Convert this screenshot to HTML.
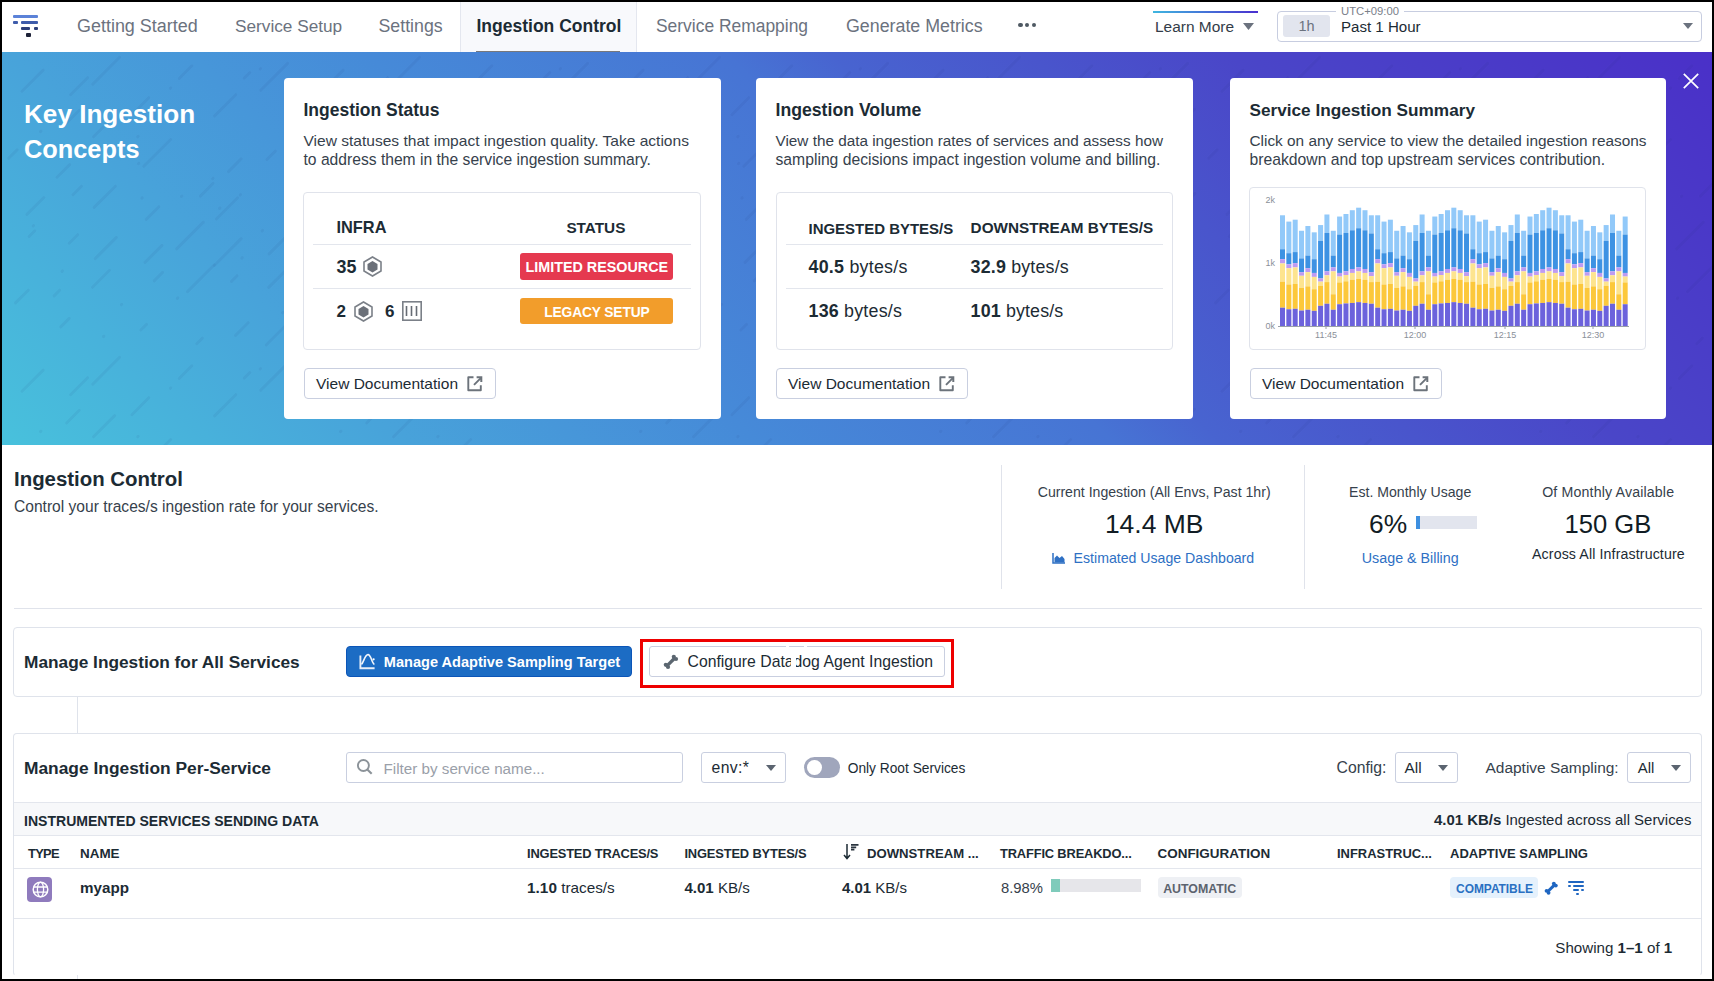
<!DOCTYPE html>
<html><head><meta charset="utf-8"><title>Ingestion Control</title>
<style>
html,body{margin:0;padding:0;width:1714px;height:981px;overflow:hidden;background:#000;}
body{position:relative;font-family:"Liberation Sans",sans-serif;color:#1c2b34;}
.t{position:absolute;white-space:nowrap;line-height:1;}
.r{position:absolute;box-sizing:border-box;}
svg{position:absolute;overflow:visible;}
</style></head><body>
<div class="r" style="left:2px;top:2px;width:1710px;height:977px;background:#fff;"></div>
<div class="r" style="left:13px;top:14.5px;width:25px;height:3.0px;background:#5b82d8;border-radius:1px;"></div>
<div class="r" style="left:13px;top:21px;width:5px;height:3px;background:#3f5cab;border-radius:1px;"></div>
<div class="r" style="left:21px;top:21px;width:17px;height:3px;background:#3f5cab;border-radius:1px;"></div>
<div class="r" style="left:21px;top:27px;width:9px;height:3px;background:#2d3f7a;border-radius:1px;"></div>
<div class="r" style="left:33.5px;top:27px;width:4.5px;height:3px;background:#2d3f7a;border-radius:1px;"></div>
<div class="r" style="left:26px;top:33px;width:4.5px;height:3.5px;background:#1d2238;border-radius:1px;"></div>
<div class="r" style="left:460px;top:2px;width:177px;height:50px;background:#f8f9fc;border-left:1px solid #e4e7ef;border-right:1px solid #e4e7ef;"></div>
<div class="r" style="left:476px;top:51px;width:144px;height:1px;background:#77787c;"></div>
<div class="t" style="left:77.0px;top:18.30px;font-size:17.95px;color:#6b727e;letter-spacing:0.000px;">Getting Started</div>
<div class="t" style="left:235.0px;top:18.30px;font-size:17.23px;color:#6b727e;letter-spacing:0.000px;">Service Setup</div>
<div class="t" style="left:378.5px;top:18.30px;font-size:17.75px;color:#6b727e;letter-spacing:0.000px;">Settings</div>
<div class="t" style="left:476.5px;top:18.30px;font-size:17.5px;font-weight:700;color:#1c2b34;letter-spacing:-0.000px;">Ingestion Control</div>
<div class="t" style="left:656.0px;top:18.30px;font-size:17.43px;color:#6b727e;letter-spacing:0.000px;">Service Remapping</div>
<div class="t" style="left:846.0px;top:18.30px;font-size:17.82px;color:#6b727e;letter-spacing:0.000px;">Generate Metrics</div>
<div class="r" style="left:1018.4px;top:22.6px;width:4.2000000000000455px;height:4.199999999999999px;background:#4f5963;border-radius:50%;"></div>
<div class="r" style="left:1025.1000000000001px;top:22.6px;width:4.199999999999818px;height:4.199999999999999px;background:#4f5963;border-radius:50%;"></div>
<div class="r" style="left:1031.8000000000002px;top:22.6px;width:4.199999999999818px;height:4.199999999999999px;background:#4f5963;border-radius:50%;"></div>
<div class="r" style="left:1153px;top:11px;width:105px;height:2px;background:linear-gradient(90deg,#3fb6e0,#4a2fcf);"></div>
<div class="t" style="left:1155.0px;top:19.00px;font-size:15.46px;color:#333c48;letter-spacing:0.000px;">Learn More</div>
<svg style="left:1243px;top:23px" width="11" height="7"><path d="M0 0H11L5.5 7Z" fill="#6b727e"/></svg>
<div class="r" style="left:1277px;top:11px;width:425px;height:31px;border:1px solid #c7cde0;border-radius:4px;"></div>
<div class="r" style="left:1336px;top:6px;width:68px;height:8px;background:#fff;"></div>
<div class="t" style="left:1341.0px;top:5.60px;font-size:11.29px;color:#7a808a;letter-spacing:0.000px;">UTC+09:00</div>
<div class="r" style="left:1283px;top:15px;width:47px;height:22px;background:#e2e5ee;border-radius:3px;"></div>
<div class="t" style="left:1306.5px;top:18.60px;font-size:14.5px;color:#6b727e;transform:translateX(-50%);">1h</div>
<div class="t" style="left:1341.0px;top:19.00px;font-size:15.09px;color:#1c2b34;letter-spacing:0.000px;">Past 1 Hour</div>
<svg style="left:1683px;top:23px" width="10" height="6"><path d="M0 0H10L5 6Z" fill="#6b727e"/></svg>
<div class="r" style="left:2px;top:52px;width:1710px;height:393px;background:linear-gradient(45deg,#48c1dc 0%,#48a3da 19%,#468ad8 36%,#4774d4 53%,#4864d0 58%,#4a46c8 77%,#4a30c8 100%);"></div>
<div class="r" style="left:2px;top:52px;width:1710px;height:393px;overflow:hidden"><svg width="1710" height="393" style="left:0;top:0"><defs><pattern id="dp" width="300" height="300" patternUnits="userSpaceOnUse"><g stroke="rgba(20,40,110,0.06)" stroke-width="3" stroke-linecap="round" fill="none"><path d="M20.0 39.3L41.2 18.1"/><path d="M238.1 143.0l0.5 -0.5"/><path d="M6.7 106.3L15.2 97.8"/><path d="M239.8 206.1l0.5 -0.5"/><path d="M24.9 162.4L41.9 145.5"/><path d="M27.1 184.5L32.8 178.8"/><path d="M260.1 178.9l0.5 -0.5"/><path d="M13.5 250.9L26.3 238.2"/><path d="M68.6 42.7L85.6 25.7"/><path d="M64.6 71.0L77.3 58.3"/><path d="M168.3 36.3l0.5 -0.5"/><path d="M55.0 125.3L67.7 112.6"/><path d="M71.0 142.7L79.5 134.2"/><path d="M210.6 126.7l0.5 -0.5"/><path d="M67.2 191.2L75.7 182.7"/><path d="M101.4 284.6l0.5 -0.5"/><path d="M52.1 243.9L57.7 238.2"/><path d="M139.8 146.2l0.5 -0.5"/><path d="M58.7 274.9L67.2 266.4"/><path d="M90.7 32.2L117.6 5.3"/><path d="M91.5 84.8L112.7 63.6"/><path d="M119.3 252.8l0.5 -0.5"/><path d="M92.5 100.9L98.2 95.2"/><path d="M92.1 155.4L113.4 134.2"/><path d="M31.1 174.0l0.5 -0.5"/><path d="M93.2 206.6L114.4 185.4"/><path d="M175.3 246.4l0.5 -0.5"/><path d="M90.5 235.3L107.5 218.3"/><path d="M60.0 219.4l0.5 -0.5"/><path d="M280.5 260.8l0.5 -0.5"/><path d="M129.9 62.7L146.8 45.7"/><path d="M141.8 114.3L168.7 87.5"/><path d="M144.2 167.4L156.9 154.7"/><path d="M143.0 210.4L160.0 193.4"/><path d="M152.2 228.9L160.6 220.4"/><path d="M138.8 278.0L144.5 272.4"/><path d="M177.2 26.5L189.9 13.8"/><path d="M217.5 156.4l0.5 -0.5"/><path d="M198.4 144.1L211.1 131.3"/><path d="M174.6 196.9L201.4 170.1"/><path d="M136.4 111.7l0.5 -0.5"/><path d="M185.5 239.6L212.4 212.8"/><path d="M194.8 291.7L200.4 286.1"/><path d="M242.2 26.1L247.9 20.5"/><path d="M212.6 63.9L233.8 42.7"/><path d="M38.5 79.6l0.5 -0.5"/><path d="M226.5 119.6L239.2 106.8"/><path d="M214.4 167.0L235.6 145.8"/><path d="M179.4 144.5l0.5 -0.5"/><path d="M212.3 213.5L239.2 186.6"/><path d="M229.5 229.4L235.1 223.7"/><path d="M233.5 283.4L246.2 270.7"/><path d="M258.7 38.3L285.6 11.4"/><path d="M284.1 65.6L292.6 57.1"/><path d="M264.9 107.5L273.4 99.1"/><path d="M287.3 147.1L293.0 141.4"/><path d="M135.7 84.8l0.5 -0.5"/><path d="M267.1 201.9L284.0 184.9"/><path d="M266.7 235.4L288.0 214.2"/><path d="M258.1 17.0l0.5 -0.5"/><path d="M264.2 293.0L285.4 271.8"/></g></pattern></defs><rect width="1710" height="393" fill="url(#dp)"/></svg></div>
<div class="t" style="left:24.0px;top:101.00px;font-size:26.12px;font-weight:700;color:#fff;letter-spacing:0.000px;">Key Ingestion</div>
<div class="t" style="left:24.0px;top:137.00px;font-size:25.35px;font-weight:700;color:#fff;letter-spacing:0.000px;">Concepts</div>
<svg style="left:1683px;top:73px" width="16" height="16"><path d="M0.8 0.8L15.2 15.2M15.2 0.8L0.8 15.2" stroke="#fff" stroke-width="1.7"/></svg>
<div class="r" style="left:284px;top:78px;width:437px;height:341px;background:#fff;border-radius:4px;"></div>
<div class="t" style="left:303.5px;top:101.70px;font-size:17.49px;font-weight:700;color:#1c2b34;letter-spacing:0.000px;">Ingestion Status</div>
<div class="t" style="left:303.5px;top:132.50px;font-size:15.55px;color:#36414c;letter-spacing:0.000px;">View statuses that impact ingestion quality. Take actions</div>
<div class="t" style="left:303.5px;top:152.10px;font-size:15.65px;color:#36414c;letter-spacing:0.000px;">to address them in the service ingestion summary.</div>
<div class="r" style="left:304px;top:368px;width:192px;height:31px;border:1px solid #c9cfe0;border-radius:4px;"></div>
<div class="t" style="left:316.0px;top:376.20px;font-size:15.52px;color:#1c2b34;letter-spacing:0.000px;">View Documentation</div>
<svg style="left:467px;top:375.5px" width="16" height="16" viewBox="0 0 16 16"><path d="M6.5 1.3H1.3V14.3H13.8V9.3" fill="none" stroke="#6c737b" stroke-width="1.9" stroke-linejoin="round"/><path d="M7 8.8L13 2.8" fill="none" stroke="#6c737b" stroke-width="1.9"/><path d="M9.6 1.3H14.3V6" fill="none" stroke="#6c737b" stroke-width="2"/><path d="M11 1.3H14.3V4.6Z" fill="#6c737b"/></svg>
<div class="r" style="left:756px;top:78px;width:437px;height:341px;background:#fff;border-radius:4px;"></div>
<div class="t" style="left:775.5px;top:101.70px;font-size:17.67px;font-weight:700;color:#1c2b34;letter-spacing:0.000px;">Ingestion Volume</div>
<div class="t" style="left:775.5px;top:132.50px;font-size:15.3px;color:#36414c;letter-spacing:0.000px;">View the data ingestion rates of services and assess how</div>
<div class="t" style="left:775.5px;top:152.10px;font-size:15.71px;color:#36414c;letter-spacing:0.000px;">sampling decisions impact ingestion volume and billing.</div>
<div class="r" style="left:776px;top:368px;width:192px;height:31px;border:1px solid #c9cfe0;border-radius:4px;"></div>
<div class="t" style="left:788.0px;top:376.20px;font-size:15.52px;color:#1c2b34;letter-spacing:0.000px;">View Documentation</div>
<svg style="left:939px;top:375.5px" width="16" height="16" viewBox="0 0 16 16"><path d="M6.5 1.3H1.3V14.3H13.8V9.3" fill="none" stroke="#6c737b" stroke-width="1.9" stroke-linejoin="round"/><path d="M7 8.8L13 2.8" fill="none" stroke="#6c737b" stroke-width="1.9"/><path d="M9.6 1.3H14.3V6" fill="none" stroke="#6c737b" stroke-width="2"/><path d="M11 1.3H14.3V4.6Z" fill="#6c737b"/></svg>
<div class="r" style="left:1230px;top:78px;width:436px;height:341px;background:#fff;border-radius:4px;"></div>
<div class="t" style="left:1249.5px;top:101.70px;font-size:17.2px;font-weight:700;color:#1c2b34;letter-spacing:0.000px;">Service Ingestion Summary</div>
<div class="t" style="left:1249.5px;top:132.50px;font-size:15.37px;color:#36414c;letter-spacing:0.000px;">Click on any service to view the detailed ingestion reasons</div>
<div class="t" style="left:1249.5px;top:152.10px;font-size:15.72px;color:#36414c;letter-spacing:0.000px;">breakdown and top upstream services contribution.</div>
<div class="r" style="left:1250px;top:368px;width:192px;height:31px;border:1px solid #c9cfe0;border-radius:4px;"></div>
<div class="t" style="left:1262.0px;top:376.20px;font-size:15.52px;color:#1c2b34;letter-spacing:0.000px;">View Documentation</div>
<svg style="left:1413px;top:375.5px" width="16" height="16" viewBox="0 0 16 16"><path d="M6.5 1.3H1.3V14.3H13.8V9.3" fill="none" stroke="#6c737b" stroke-width="1.9" stroke-linejoin="round"/><path d="M7 8.8L13 2.8" fill="none" stroke="#6c737b" stroke-width="1.9"/><path d="M9.6 1.3H14.3V6" fill="none" stroke="#6c737b" stroke-width="2"/><path d="M11 1.3H14.3V4.6Z" fill="#6c737b"/></svg>
<div class="r" style="left:303px;top:192px;width:398px;height:158px;border:1px solid #e0e3eb;border-radius:4px;"></div>
<div class="t" style="left:336.5px;top:219.00px;font-size:16.36px;font-weight:700;color:#1c2b34;letter-spacing:0.000px;">INFRA</div>
<div class="t" style="left:566.4px;top:220.00px;font-size:15.32px;font-weight:700;color:#1c2b34;letter-spacing:0.000px;">STATUS</div>
<div class="r" style="left:313px;top:243.5px;width:378px;height:1.0px;background:#e3e6ed;"></div>
<div class="r" style="left:313px;top:287.5px;width:378px;height:1.0px;background:#e3e6ed;"></div>
<div class="t" style="left:336.5px;top:258.70px;font-size:17.85px;font-weight:700;color:#1c2b34;letter-spacing:0.132px;">35</div>
<svg style="left:363px;top:256px" width="19" height="21" viewBox="0 0 19 21"><path d="M9.5 1L18 6V15L9.5 20L1 15V6Z" fill="none" stroke="#7b8088" stroke-width="1.6"/><path d="M9.5 5L14.5 8V13.5L9.5 16.5L4.5 13.5V8Z" fill="#6b7079"/></svg>
<div class="t" style="left:336.5px;top:303.00px;font-size:17px;font-weight:700;color:#1c2b34;">2</div>
<svg style="left:353.5px;top:300.5px" width="19" height="21" viewBox="0 0 19 21"><path d="M9.5 1L18 6V15L9.5 20L1 15V6Z" fill="none" stroke="#7b8088" stroke-width="1.6"/><path d="M9.5 5L14.5 8V13.5L9.5 16.5L4.5 13.5V8Z" fill="#6b7079"/></svg>
<div class="t" style="left:385.0px;top:303.00px;font-size:17px;font-weight:700;color:#1c2b34;">6</div>
<svg style="left:402px;top:301px" width="20" height="20" viewBox="0 0 20 20"><rect x="0.8" y="0.8" width="18.4" height="18.4" fill="none" stroke="#7b8088" stroke-width="1.6"/><path d="M4.5 4.9V15.1M9.5 4.9V15.1M14.5 4.9V15.1" stroke="#666c74" stroke-width="1.6"/></svg>
<div class="r" style="left:520px;top:253px;width:153px;height:27px;background:#e5394f;border-radius:3px;"></div>
<div class="t" style="left:525.5px;top:260.00px;font-size:14.35px;font-weight:700;color:#fff;letter-spacing:0.000px;">LIMITED RESOURCE</div>
<div class="r" style="left:520px;top:297.5px;width:153px;height:26.5px;background:#f29d2b;border-radius:3px;"></div>
<div class="t" style="left:544.2px;top:305.50px;font-size:13.8px;font-weight:700;color:#fff;letter-spacing:-0.137px;">LEGACY SETUP</div>
<div class="r" style="left:776px;top:192px;width:397px;height:158px;border:1px solid #e0e3eb;border-radius:4px;"></div>
<div class="t" style="left:808.5px;top:221.00px;font-size:14.98px;font-weight:700;color:#1c2b34;letter-spacing:0.000px;">INGESTED BYTES/S</div>
<div class="t" style="left:970.6px;top:220.00px;font-size:15.29px;font-weight:700;color:#1c2b34;letter-spacing:0.000px;">DOWNSTREAM BYTES/S</div>
<div class="r" style="left:786px;top:243.5px;width:377px;height:1.0px;background:#e3e6ed;"></div>
<div class="r" style="left:786px;top:287.5px;width:377px;height:1.0px;background:#e3e6ed;"></div>
<div class="t" style="left:808.5px;top:258.70px;font-size:17.85px;color:#1c2b34;letter-spacing:0.239px;"><b>40.5</b> bytes/s</div>
<div class="t" style="left:970.6px;top:258.70px;font-size:17.85px;color:#1c2b34;letter-spacing:0.175px;"><b>32.9</b> bytes/s</div>
<div class="t" style="left:808.5px;top:303.00px;font-size:17.85px;color:#1c2b34;letter-spacing:0.208px;"><b>136</b> bytes/s</div>
<div class="t" style="left:970.6px;top:303.00px;font-size:17.85px;color:#1c2b34;letter-spacing:0.138px;"><b>101</b> bytes/s</div>
<div class="r" style="left:1249px;top:187px;width:397px;height:163px;border:1px solid #e0e3eb;border-radius:4px;"></div>
<div class="r" style="left:1249px;top:188px;width:397px;height:162px;"><svg width="397" height="162" viewBox="0 0 397 162" style="position:absolute;left:0;top:0"><rect x="31.00" y="27.28" width="5.0" height="33.97" fill="#92c9f9"/><rect x="31.00" y="61.24" width="5.0" height="9.95" fill="#3d92e3"/><rect x="31.00" y="71.19" width="5.0" height="4.27" fill="#bf9bf2"/><rect x="31.00" y="75.46" width="5.0" height="18.17" fill="#fde48e"/><rect x="31.00" y="93.63" width="5.0" height="26.07" fill="#fcc83b"/><rect x="31.00" y="119.69" width="5.0" height="18.31" fill="#6c62dc"/><rect x="37.35" y="33.60" width="5.0" height="31.60" fill="#92c9f9"/><rect x="37.35" y="65.19" width="5.0" height="11.06" fill="#3d92e3"/><rect x="37.35" y="76.25" width="5.0" height="3.95" fill="#bf9bf2"/><rect x="37.35" y="80.20" width="5.0" height="16.27" fill="#fde48e"/><rect x="37.35" y="96.47" width="5.0" height="24.80" fill="#fcc83b"/><rect x="37.35" y="121.27" width="5.0" height="16.73" fill="#6c62dc"/><rect x="43.69" y="31.70" width="5.0" height="32.39" fill="#92c9f9"/><rect x="43.69" y="64.09" width="5.0" height="11.06" fill="#3d92e3"/><rect x="43.69" y="75.14" width="5.0" height="4.27" fill="#bf9bf2"/><rect x="43.69" y="79.41" width="5.0" height="16.59" fill="#fde48e"/><rect x="43.69" y="96.00" width="5.0" height="24.80" fill="#fcc83b"/><rect x="43.69" y="120.80" width="5.0" height="17.20" fill="#6c62dc"/><rect x="50.04" y="42.76" width="5.0" height="27.65" fill="#92c9f9"/><rect x="50.04" y="70.40" width="5.0" height="13.74" fill="#3d92e3"/><rect x="50.04" y="84.15" width="5.0" height="3.63" fill="#bf9bf2"/><rect x="50.04" y="87.78" width="5.0" height="12.16" fill="#fde48e"/><rect x="50.04" y="99.95" width="5.0" height="22.59" fill="#fcc83b"/><rect x="50.04" y="122.54" width="5.0" height="15.46" fill="#6c62dc"/><rect x="56.38" y="38.02" width="5.0" height="29.54" fill="#92c9f9"/><rect x="56.38" y="67.56" width="5.0" height="12.64" fill="#3d92e3"/><rect x="56.38" y="80.20" width="5.0" height="3.95" fill="#bf9bf2"/><rect x="56.38" y="84.15" width="5.0" height="14.22" fill="#fde48e"/><rect x="56.38" y="98.37" width="5.0" height="23.38" fill="#fcc83b"/><rect x="56.38" y="121.75" width="5.0" height="16.25" fill="#6c62dc"/><rect x="62.73" y="44.34" width="5.0" height="26.86" fill="#92c9f9"/><rect x="62.73" y="71.19" width="5.0" height="13.74" fill="#3d92e3"/><rect x="62.73" y="84.94" width="5.0" height="3.95" fill="#bf9bf2"/><rect x="62.73" y="88.89" width="5.0" height="12.32" fill="#fde48e"/><rect x="62.73" y="101.21" width="5.0" height="21.64" fill="#fcc83b"/><rect x="62.73" y="122.85" width="5.0" height="15.15" fill="#6c62dc"/><rect x="69.08" y="37.07" width="5.0" height="15.80" fill="#92c9f9"/><rect x="69.08" y="52.87" width="5.0" height="37.60" fill="#3d92e3"/><rect x="69.08" y="90.47" width="5.0" height="3.16" fill="#bf9bf2"/><rect x="69.08" y="93.63" width="5.0" height="4.27" fill="#fde48e"/><rect x="69.08" y="97.89" width="5.0" height="19.91" fill="#fcc83b"/><rect x="69.08" y="117.80" width="5.0" height="20.20" fill="#6c62dc"/><rect x="75.42" y="26.49" width="5.0" height="18.48" fill="#92c9f9"/><rect x="75.42" y="44.97" width="5.0" height="38.39" fill="#3d92e3"/><rect x="75.42" y="83.36" width="5.0" height="3.95" fill="#bf9bf2"/><rect x="75.42" y="87.31" width="5.0" height="6.79" fill="#fde48e"/><rect x="75.42" y="94.10" width="5.0" height="21.64" fill="#fcc83b"/><rect x="75.42" y="115.74" width="5.0" height="22.26" fill="#6c62dc"/><rect x="81.77" y="42.76" width="5.0" height="24.80" fill="#92c9f9"/><rect x="81.77" y="67.56" width="5.0" height="11.85" fill="#3d92e3"/><rect x="81.77" y="79.41" width="5.0" height="3.95" fill="#bf9bf2"/><rect x="81.77" y="83.36" width="5.0" height="22.91" fill="#fde48e"/><rect x="81.77" y="106.27" width="5.0" height="15.48" fill="#fcc83b"/><rect x="81.77" y="121.75" width="5.0" height="16.25" fill="#6c62dc"/><rect x="88.11" y="28.54" width="5.0" height="18.01" fill="#92c9f9"/><rect x="88.11" y="46.55" width="5.0" height="38.39" fill="#3d92e3"/><rect x="88.11" y="84.94" width="5.0" height="3.63" fill="#bf9bf2"/><rect x="88.11" y="88.57" width="5.0" height="5.85" fill="#fde48e"/><rect x="88.11" y="94.42" width="5.0" height="21.80" fill="#fcc83b"/><rect x="88.11" y="116.22" width="5.0" height="21.78" fill="#6c62dc"/><rect x="94.46" y="26.01" width="5.0" height="18.96" fill="#92c9f9"/><rect x="94.46" y="44.97" width="5.0" height="38.39" fill="#3d92e3"/><rect x="94.46" y="83.36" width="5.0" height="3.63" fill="#bf9bf2"/><rect x="94.46" y="86.99" width="5.0" height="6.32" fill="#fde48e"/><rect x="94.46" y="93.31" width="5.0" height="22.12" fill="#fcc83b"/><rect x="94.46" y="115.43" width="5.0" height="22.57" fill="#6c62dc"/><rect x="100.81" y="22.22" width="5.0" height="20.06" fill="#92c9f9"/><rect x="100.81" y="42.28" width="5.0" height="38.70" fill="#3d92e3"/><rect x="100.81" y="80.99" width="5.0" height="3.95" fill="#bf9bf2"/><rect x="100.81" y="84.94" width="5.0" height="6.79" fill="#fde48e"/><rect x="100.81" y="91.73" width="5.0" height="23.22" fill="#fcc83b"/><rect x="100.81" y="114.95" width="5.0" height="23.05" fill="#6c62dc"/><rect x="107.15" y="19.69" width="5.0" height="20.54" fill="#92c9f9"/><rect x="107.15" y="40.23" width="5.0" height="39.18" fill="#3d92e3"/><rect x="107.15" y="79.41" width="5.0" height="3.95" fill="#bf9bf2"/><rect x="107.15" y="83.36" width="5.0" height="7.58" fill="#fde48e"/><rect x="107.15" y="90.94" width="5.0" height="23.22" fill="#fcc83b"/><rect x="107.15" y="114.16" width="5.0" height="23.84" fill="#6c62dc"/><rect x="113.50" y="22.22" width="5.0" height="20.06" fill="#92c9f9"/><rect x="113.50" y="42.28" width="5.0" height="38.70" fill="#3d92e3"/><rect x="113.50" y="80.99" width="5.0" height="3.95" fill="#bf9bf2"/><rect x="113.50" y="84.94" width="5.0" height="6.79" fill="#fde48e"/><rect x="113.50" y="91.73" width="5.0" height="23.22" fill="#fcc83b"/><rect x="113.50" y="114.95" width="5.0" height="23.05" fill="#6c62dc"/><rect x="119.84" y="27.28" width="5.0" height="18.17" fill="#92c9f9"/><rect x="119.84" y="45.44" width="5.0" height="38.70" fill="#3d92e3"/><rect x="119.84" y="84.15" width="5.0" height="3.95" fill="#bf9bf2"/><rect x="119.84" y="88.10" width="5.0" height="6.00" fill="#fde48e"/><rect x="119.84" y="94.10" width="5.0" height="21.64" fill="#fcc83b"/><rect x="119.84" y="115.74" width="5.0" height="22.26" fill="#6c62dc"/><rect x="126.19" y="27.28" width="5.0" height="33.97" fill="#92c9f9"/><rect x="126.19" y="61.24" width="5.0" height="9.95" fill="#3d92e3"/><rect x="126.19" y="71.19" width="5.0" height="4.27" fill="#bf9bf2"/><rect x="126.19" y="75.46" width="5.0" height="18.17" fill="#fde48e"/><rect x="126.19" y="93.63" width="5.0" height="26.07" fill="#fcc83b"/><rect x="126.19" y="119.69" width="5.0" height="18.31" fill="#6c62dc"/><rect x="132.54" y="33.60" width="5.0" height="31.60" fill="#92c9f9"/><rect x="132.54" y="65.19" width="5.0" height="11.06" fill="#3d92e3"/><rect x="132.54" y="76.25" width="5.0" height="3.95" fill="#bf9bf2"/><rect x="132.54" y="80.20" width="5.0" height="16.27" fill="#fde48e"/><rect x="132.54" y="96.47" width="5.0" height="24.80" fill="#fcc83b"/><rect x="132.54" y="121.27" width="5.0" height="16.73" fill="#6c62dc"/><rect x="138.88" y="31.70" width="5.0" height="32.39" fill="#92c9f9"/><rect x="138.88" y="64.09" width="5.0" height="11.06" fill="#3d92e3"/><rect x="138.88" y="75.14" width="5.0" height="4.27" fill="#bf9bf2"/><rect x="138.88" y="79.41" width="5.0" height="16.59" fill="#fde48e"/><rect x="138.88" y="96.00" width="5.0" height="24.80" fill="#fcc83b"/><rect x="138.88" y="120.80" width="5.0" height="17.20" fill="#6c62dc"/><rect x="145.23" y="42.76" width="5.0" height="27.65" fill="#92c9f9"/><rect x="145.23" y="70.40" width="5.0" height="13.74" fill="#3d92e3"/><rect x="145.23" y="84.15" width="5.0" height="3.63" fill="#bf9bf2"/><rect x="145.23" y="87.78" width="5.0" height="12.16" fill="#fde48e"/><rect x="145.23" y="99.95" width="5.0" height="22.59" fill="#fcc83b"/><rect x="145.23" y="122.54" width="5.0" height="15.46" fill="#6c62dc"/><rect x="151.57" y="38.02" width="5.0" height="29.54" fill="#92c9f9"/><rect x="151.57" y="67.56" width="5.0" height="12.64" fill="#3d92e3"/><rect x="151.57" y="80.20" width="5.0" height="3.95" fill="#bf9bf2"/><rect x="151.57" y="84.15" width="5.0" height="14.22" fill="#fde48e"/><rect x="151.57" y="98.37" width="5.0" height="23.38" fill="#fcc83b"/><rect x="151.57" y="121.75" width="5.0" height="16.25" fill="#6c62dc"/><rect x="157.92" y="44.34" width="5.0" height="26.86" fill="#92c9f9"/><rect x="157.92" y="71.19" width="5.0" height="13.74" fill="#3d92e3"/><rect x="157.92" y="84.94" width="5.0" height="3.95" fill="#bf9bf2"/><rect x="157.92" y="88.89" width="5.0" height="12.32" fill="#fde48e"/><rect x="157.92" y="101.21" width="5.0" height="21.64" fill="#fcc83b"/><rect x="157.92" y="122.85" width="5.0" height="15.15" fill="#6c62dc"/><rect x="164.27" y="37.07" width="5.0" height="15.80" fill="#92c9f9"/><rect x="164.27" y="52.87" width="5.0" height="37.60" fill="#3d92e3"/><rect x="164.27" y="90.47" width="5.0" height="3.16" fill="#bf9bf2"/><rect x="164.27" y="93.63" width="5.0" height="4.27" fill="#fde48e"/><rect x="164.27" y="97.89" width="5.0" height="19.91" fill="#fcc83b"/><rect x="164.27" y="117.80" width="5.0" height="20.20" fill="#6c62dc"/><rect x="170.61" y="26.49" width="5.0" height="18.48" fill="#92c9f9"/><rect x="170.61" y="44.97" width="5.0" height="38.39" fill="#3d92e3"/><rect x="170.61" y="83.36" width="5.0" height="3.95" fill="#bf9bf2"/><rect x="170.61" y="87.31" width="5.0" height="6.79" fill="#fde48e"/><rect x="170.61" y="94.10" width="5.0" height="21.64" fill="#fcc83b"/><rect x="170.61" y="115.74" width="5.0" height="22.26" fill="#6c62dc"/><rect x="176.96" y="42.76" width="5.0" height="24.80" fill="#92c9f9"/><rect x="176.96" y="67.56" width="5.0" height="11.85" fill="#3d92e3"/><rect x="176.96" y="79.41" width="5.0" height="3.95" fill="#bf9bf2"/><rect x="176.96" y="83.36" width="5.0" height="22.91" fill="#fde48e"/><rect x="176.96" y="106.27" width="5.0" height="15.48" fill="#fcc83b"/><rect x="176.96" y="121.75" width="5.0" height="16.25" fill="#6c62dc"/><rect x="183.30" y="28.54" width="5.0" height="18.01" fill="#92c9f9"/><rect x="183.30" y="46.55" width="5.0" height="38.39" fill="#3d92e3"/><rect x="183.30" y="84.94" width="5.0" height="3.63" fill="#bf9bf2"/><rect x="183.30" y="88.57" width="5.0" height="5.85" fill="#fde48e"/><rect x="183.30" y="94.42" width="5.0" height="21.80" fill="#fcc83b"/><rect x="183.30" y="116.22" width="5.0" height="21.78" fill="#6c62dc"/><rect x="189.65" y="26.01" width="5.0" height="18.96" fill="#92c9f9"/><rect x="189.65" y="44.97" width="5.0" height="38.39" fill="#3d92e3"/><rect x="189.65" y="83.36" width="5.0" height="3.63" fill="#bf9bf2"/><rect x="189.65" y="86.99" width="5.0" height="6.32" fill="#fde48e"/><rect x="189.65" y="93.31" width="5.0" height="22.12" fill="#fcc83b"/><rect x="189.65" y="115.43" width="5.0" height="22.57" fill="#6c62dc"/><rect x="196.00" y="22.22" width="5.0" height="20.06" fill="#92c9f9"/><rect x="196.00" y="42.28" width="5.0" height="38.70" fill="#3d92e3"/><rect x="196.00" y="80.99" width="5.0" height="3.95" fill="#bf9bf2"/><rect x="196.00" y="84.94" width="5.0" height="6.79" fill="#fde48e"/><rect x="196.00" y="91.73" width="5.0" height="23.22" fill="#fcc83b"/><rect x="196.00" y="114.95" width="5.0" height="23.05" fill="#6c62dc"/><rect x="202.34" y="19.69" width="5.0" height="20.54" fill="#92c9f9"/><rect x="202.34" y="40.23" width="5.0" height="39.18" fill="#3d92e3"/><rect x="202.34" y="79.41" width="5.0" height="3.95" fill="#bf9bf2"/><rect x="202.34" y="83.36" width="5.0" height="7.58" fill="#fde48e"/><rect x="202.34" y="90.94" width="5.0" height="23.22" fill="#fcc83b"/><rect x="202.34" y="114.16" width="5.0" height="23.84" fill="#6c62dc"/><rect x="208.69" y="22.22" width="5.0" height="20.06" fill="#92c9f9"/><rect x="208.69" y="42.28" width="5.0" height="38.70" fill="#3d92e3"/><rect x="208.69" y="80.99" width="5.0" height="3.95" fill="#bf9bf2"/><rect x="208.69" y="84.94" width="5.0" height="6.79" fill="#fde48e"/><rect x="208.69" y="91.73" width="5.0" height="23.22" fill="#fcc83b"/><rect x="208.69" y="114.95" width="5.0" height="23.05" fill="#6c62dc"/><rect x="215.03" y="27.28" width="5.0" height="18.17" fill="#92c9f9"/><rect x="215.03" y="45.44" width="5.0" height="38.70" fill="#3d92e3"/><rect x="215.03" y="84.15" width="5.0" height="3.95" fill="#bf9bf2"/><rect x="215.03" y="88.10" width="5.0" height="6.00" fill="#fde48e"/><rect x="215.03" y="94.10" width="5.0" height="21.64" fill="#fcc83b"/><rect x="215.03" y="115.74" width="5.0" height="22.26" fill="#6c62dc"/><rect x="221.38" y="27.28" width="5.0" height="33.97" fill="#92c9f9"/><rect x="221.38" y="61.24" width="5.0" height="9.95" fill="#3d92e3"/><rect x="221.38" y="71.19" width="5.0" height="4.27" fill="#bf9bf2"/><rect x="221.38" y="75.46" width="5.0" height="18.17" fill="#fde48e"/><rect x="221.38" y="93.63" width="5.0" height="26.07" fill="#fcc83b"/><rect x="221.38" y="119.69" width="5.0" height="18.31" fill="#6c62dc"/><rect x="227.73" y="33.60" width="5.0" height="31.60" fill="#92c9f9"/><rect x="227.73" y="65.19" width="5.0" height="11.06" fill="#3d92e3"/><rect x="227.73" y="76.25" width="5.0" height="3.95" fill="#bf9bf2"/><rect x="227.73" y="80.20" width="5.0" height="16.27" fill="#fde48e"/><rect x="227.73" y="96.47" width="5.0" height="24.80" fill="#fcc83b"/><rect x="227.73" y="121.27" width="5.0" height="16.73" fill="#6c62dc"/><rect x="234.07" y="31.70" width="5.0" height="32.39" fill="#92c9f9"/><rect x="234.07" y="64.09" width="5.0" height="11.06" fill="#3d92e3"/><rect x="234.07" y="75.14" width="5.0" height="4.27" fill="#bf9bf2"/><rect x="234.07" y="79.41" width="5.0" height="16.59" fill="#fde48e"/><rect x="234.07" y="96.00" width="5.0" height="24.80" fill="#fcc83b"/><rect x="234.07" y="120.80" width="5.0" height="17.20" fill="#6c62dc"/><rect x="240.42" y="42.76" width="5.0" height="27.65" fill="#92c9f9"/><rect x="240.42" y="70.40" width="5.0" height="13.74" fill="#3d92e3"/><rect x="240.42" y="84.15" width="5.0" height="3.63" fill="#bf9bf2"/><rect x="240.42" y="87.78" width="5.0" height="12.16" fill="#fde48e"/><rect x="240.42" y="99.95" width="5.0" height="22.59" fill="#fcc83b"/><rect x="240.42" y="122.54" width="5.0" height="15.46" fill="#6c62dc"/><rect x="246.76" y="38.02" width="5.0" height="29.54" fill="#92c9f9"/><rect x="246.76" y="67.56" width="5.0" height="12.64" fill="#3d92e3"/><rect x="246.76" y="80.20" width="5.0" height="3.95" fill="#bf9bf2"/><rect x="246.76" y="84.15" width="5.0" height="14.22" fill="#fde48e"/><rect x="246.76" y="98.37" width="5.0" height="23.38" fill="#fcc83b"/><rect x="246.76" y="121.75" width="5.0" height="16.25" fill="#6c62dc"/><rect x="253.11" y="44.34" width="5.0" height="26.86" fill="#92c9f9"/><rect x="253.11" y="71.19" width="5.0" height="13.74" fill="#3d92e3"/><rect x="253.11" y="84.94" width="5.0" height="3.95" fill="#bf9bf2"/><rect x="253.11" y="88.89" width="5.0" height="12.32" fill="#fde48e"/><rect x="253.11" y="101.21" width="5.0" height="21.64" fill="#fcc83b"/><rect x="253.11" y="122.85" width="5.0" height="15.15" fill="#6c62dc"/><rect x="259.46" y="37.07" width="5.0" height="15.80" fill="#92c9f9"/><rect x="259.46" y="52.87" width="5.0" height="37.60" fill="#3d92e3"/><rect x="259.46" y="90.47" width="5.0" height="3.16" fill="#bf9bf2"/><rect x="259.46" y="93.63" width="5.0" height="4.27" fill="#fde48e"/><rect x="259.46" y="97.89" width="5.0" height="19.91" fill="#fcc83b"/><rect x="259.46" y="117.80" width="5.0" height="20.20" fill="#6c62dc"/><rect x="265.80" y="26.49" width="5.0" height="18.48" fill="#92c9f9"/><rect x="265.80" y="44.97" width="5.0" height="38.39" fill="#3d92e3"/><rect x="265.80" y="83.36" width="5.0" height="3.95" fill="#bf9bf2"/><rect x="265.80" y="87.31" width="5.0" height="6.79" fill="#fde48e"/><rect x="265.80" y="94.10" width="5.0" height="21.64" fill="#fcc83b"/><rect x="265.80" y="115.74" width="5.0" height="22.26" fill="#6c62dc"/><rect x="272.15" y="42.76" width="5.0" height="24.80" fill="#92c9f9"/><rect x="272.15" y="67.56" width="5.0" height="11.85" fill="#3d92e3"/><rect x="272.15" y="79.41" width="5.0" height="3.95" fill="#bf9bf2"/><rect x="272.15" y="83.36" width="5.0" height="22.91" fill="#fde48e"/><rect x="272.15" y="106.27" width="5.0" height="15.48" fill="#fcc83b"/><rect x="272.15" y="121.75" width="5.0" height="16.25" fill="#6c62dc"/><rect x="278.49" y="28.54" width="5.0" height="18.01" fill="#92c9f9"/><rect x="278.49" y="46.55" width="5.0" height="38.39" fill="#3d92e3"/><rect x="278.49" y="84.94" width="5.0" height="3.63" fill="#bf9bf2"/><rect x="278.49" y="88.57" width="5.0" height="5.85" fill="#fde48e"/><rect x="278.49" y="94.42" width="5.0" height="21.80" fill="#fcc83b"/><rect x="278.49" y="116.22" width="5.0" height="21.78" fill="#6c62dc"/><rect x="284.84" y="26.01" width="5.0" height="18.96" fill="#92c9f9"/><rect x="284.84" y="44.97" width="5.0" height="38.39" fill="#3d92e3"/><rect x="284.84" y="83.36" width="5.0" height="3.63" fill="#bf9bf2"/><rect x="284.84" y="86.99" width="5.0" height="6.32" fill="#fde48e"/><rect x="284.84" y="93.31" width="5.0" height="22.12" fill="#fcc83b"/><rect x="284.84" y="115.43" width="5.0" height="22.57" fill="#6c62dc"/><rect x="291.19" y="22.22" width="5.0" height="20.06" fill="#92c9f9"/><rect x="291.19" y="42.28" width="5.0" height="38.70" fill="#3d92e3"/><rect x="291.19" y="80.99" width="5.0" height="3.95" fill="#bf9bf2"/><rect x="291.19" y="84.94" width="5.0" height="6.79" fill="#fde48e"/><rect x="291.19" y="91.73" width="5.0" height="23.22" fill="#fcc83b"/><rect x="291.19" y="114.95" width="5.0" height="23.05" fill="#6c62dc"/><rect x="297.53" y="19.69" width="5.0" height="20.54" fill="#92c9f9"/><rect x="297.53" y="40.23" width="5.0" height="39.18" fill="#3d92e3"/><rect x="297.53" y="79.41" width="5.0" height="3.95" fill="#bf9bf2"/><rect x="297.53" y="83.36" width="5.0" height="7.58" fill="#fde48e"/><rect x="297.53" y="90.94" width="5.0" height="23.22" fill="#fcc83b"/><rect x="297.53" y="114.16" width="5.0" height="23.84" fill="#6c62dc"/><rect x="303.88" y="22.22" width="5.0" height="20.06" fill="#92c9f9"/><rect x="303.88" y="42.28" width="5.0" height="38.70" fill="#3d92e3"/><rect x="303.88" y="80.99" width="5.0" height="3.95" fill="#bf9bf2"/><rect x="303.88" y="84.94" width="5.0" height="6.79" fill="#fde48e"/><rect x="303.88" y="91.73" width="5.0" height="23.22" fill="#fcc83b"/><rect x="303.88" y="114.95" width="5.0" height="23.05" fill="#6c62dc"/><rect x="310.22" y="27.28" width="5.0" height="18.17" fill="#92c9f9"/><rect x="310.22" y="45.44" width="5.0" height="38.70" fill="#3d92e3"/><rect x="310.22" y="84.15" width="5.0" height="3.95" fill="#bf9bf2"/><rect x="310.22" y="88.10" width="5.0" height="6.00" fill="#fde48e"/><rect x="310.22" y="94.10" width="5.0" height="21.64" fill="#fcc83b"/><rect x="310.22" y="115.74" width="5.0" height="22.26" fill="#6c62dc"/><rect x="316.57" y="27.28" width="5.0" height="33.97" fill="#92c9f9"/><rect x="316.57" y="61.24" width="5.0" height="9.95" fill="#3d92e3"/><rect x="316.57" y="71.19" width="5.0" height="4.27" fill="#bf9bf2"/><rect x="316.57" y="75.46" width="5.0" height="18.17" fill="#fde48e"/><rect x="316.57" y="93.63" width="5.0" height="26.07" fill="#fcc83b"/><rect x="316.57" y="119.69" width="5.0" height="18.31" fill="#6c62dc"/><rect x="322.92" y="33.60" width="5.0" height="31.60" fill="#92c9f9"/><rect x="322.92" y="65.19" width="5.0" height="11.06" fill="#3d92e3"/><rect x="322.92" y="76.25" width="5.0" height="3.95" fill="#bf9bf2"/><rect x="322.92" y="80.20" width="5.0" height="16.27" fill="#fde48e"/><rect x="322.92" y="96.47" width="5.0" height="24.80" fill="#fcc83b"/><rect x="322.92" y="121.27" width="5.0" height="16.73" fill="#6c62dc"/><rect x="329.26" y="31.70" width="5.0" height="32.39" fill="#92c9f9"/><rect x="329.26" y="64.09" width="5.0" height="11.06" fill="#3d92e3"/><rect x="329.26" y="75.14" width="5.0" height="4.27" fill="#bf9bf2"/><rect x="329.26" y="79.41" width="5.0" height="16.59" fill="#fde48e"/><rect x="329.26" y="96.00" width="5.0" height="24.80" fill="#fcc83b"/><rect x="329.26" y="120.80" width="5.0" height="17.20" fill="#6c62dc"/><rect x="335.61" y="42.76" width="5.0" height="27.65" fill="#92c9f9"/><rect x="335.61" y="70.40" width="5.0" height="13.74" fill="#3d92e3"/><rect x="335.61" y="84.15" width="5.0" height="3.63" fill="#bf9bf2"/><rect x="335.61" y="87.78" width="5.0" height="12.16" fill="#fde48e"/><rect x="335.61" y="99.95" width="5.0" height="22.59" fill="#fcc83b"/><rect x="335.61" y="122.54" width="5.0" height="15.46" fill="#6c62dc"/><rect x="341.95" y="38.02" width="5.0" height="29.54" fill="#92c9f9"/><rect x="341.95" y="67.56" width="5.0" height="12.64" fill="#3d92e3"/><rect x="341.95" y="80.20" width="5.0" height="3.95" fill="#bf9bf2"/><rect x="341.95" y="84.15" width="5.0" height="14.22" fill="#fde48e"/><rect x="341.95" y="98.37" width="5.0" height="23.38" fill="#fcc83b"/><rect x="341.95" y="121.75" width="5.0" height="16.25" fill="#6c62dc"/><rect x="348.30" y="44.34" width="5.0" height="26.86" fill="#92c9f9"/><rect x="348.30" y="71.19" width="5.0" height="13.74" fill="#3d92e3"/><rect x="348.30" y="84.94" width="5.0" height="3.95" fill="#bf9bf2"/><rect x="348.30" y="88.89" width="5.0" height="12.32" fill="#fde48e"/><rect x="348.30" y="101.21" width="5.0" height="21.64" fill="#fcc83b"/><rect x="348.30" y="122.85" width="5.0" height="15.15" fill="#6c62dc"/><rect x="354.65" y="37.07" width="5.0" height="15.80" fill="#92c9f9"/><rect x="354.65" y="52.87" width="5.0" height="37.60" fill="#3d92e3"/><rect x="354.65" y="90.47" width="5.0" height="3.16" fill="#bf9bf2"/><rect x="354.65" y="93.63" width="5.0" height="4.27" fill="#fde48e"/><rect x="354.65" y="97.89" width="5.0" height="19.91" fill="#fcc83b"/><rect x="354.65" y="117.80" width="5.0" height="20.20" fill="#6c62dc"/><rect x="360.99" y="26.49" width="5.0" height="18.48" fill="#92c9f9"/><rect x="360.99" y="44.97" width="5.0" height="38.39" fill="#3d92e3"/><rect x="360.99" y="83.36" width="5.0" height="3.95" fill="#bf9bf2"/><rect x="360.99" y="87.31" width="5.0" height="6.79" fill="#fde48e"/><rect x="360.99" y="94.10" width="5.0" height="21.64" fill="#fcc83b"/><rect x="360.99" y="115.74" width="5.0" height="22.26" fill="#6c62dc"/><rect x="367.34" y="42.76" width="5.0" height="24.80" fill="#92c9f9"/><rect x="367.34" y="67.56" width="5.0" height="11.85" fill="#3d92e3"/><rect x="367.34" y="79.41" width="5.0" height="3.95" fill="#bf9bf2"/><rect x="367.34" y="83.36" width="5.0" height="22.91" fill="#fde48e"/><rect x="367.34" y="106.27" width="5.0" height="15.48" fill="#fcc83b"/><rect x="367.34" y="121.75" width="5.0" height="16.25" fill="#6c62dc"/><rect x="373.68" y="28.54" width="5.0" height="18.01" fill="#92c9f9"/><rect x="373.68" y="46.55" width="5.0" height="38.39" fill="#3d92e3"/><rect x="373.68" y="84.94" width="5.0" height="3.63" fill="#bf9bf2"/><rect x="373.68" y="88.57" width="5.0" height="5.85" fill="#fde48e"/><rect x="373.68" y="94.42" width="5.0" height="21.80" fill="#fcc83b"/><rect x="373.68" y="116.22" width="5.0" height="21.78" fill="#6c62dc"/><line x1="29" y1="138.5" x2="380" y2="138.5" stroke="#9aa0a8" stroke-width="1"/><text x="26" y="15" text-anchor="end" font-family="Liberation Sans" font-size="9" fill="#8a9099">2k</text><text x="26" y="78" text-anchor="end" font-family="Liberation Sans" font-size="9" fill="#8a9099">1k</text><text x="26" y="141" text-anchor="end" font-family="Liberation Sans" font-size="9" fill="#8a9099">0k</text><line x1="77" y1="138" x2="77" y2="141" stroke="#9aa0a8"/><text x="77" y="150" text-anchor="middle" font-family="Liberation Sans" font-size="9" fill="#8a9099">11:45</text><line x1="166" y1="138" x2="166" y2="141" stroke="#9aa0a8"/><text x="166" y="150" text-anchor="middle" font-family="Liberation Sans" font-size="9" fill="#8a9099">12:00</text><line x1="256" y1="138" x2="256" y2="141" stroke="#9aa0a8"/><text x="256" y="150" text-anchor="middle" font-family="Liberation Sans" font-size="9" fill="#8a9099">12:15</text><line x1="344" y1="138" x2="344" y2="141" stroke="#9aa0a8"/><text x="344" y="150" text-anchor="middle" font-family="Liberation Sans" font-size="9" fill="#8a9099">12:30</text></svg></div>
<div class="t" style="left:14.0px;top:468.80px;font-size:20.42px;font-weight:700;color:#1c2b34;letter-spacing:0.000px;">Ingestion Control</div>
<div class="t" style="left:14.0px;top:498.50px;font-size:15.58px;color:#36414c;letter-spacing:0.000px;">Control your traces/s ingestion rate for your services.</div>
<div class="r" style="left:1001px;top:465px;width:1px;height:124px;background:#e0e3eb;"></div>
<div class="r" style="left:1304px;top:465px;width:1px;height:124px;background:#e0e3eb;"></div>
<div class="t" style="left:1037.7px;top:484.50px;font-size:14.12px;color:#36414c;letter-spacing:0.000px;">Current Ingestion (All Envs, Past 1hr)</div>
<div class="t" style="left:1104.9px;top:510.60px;font-size:26.48px;color:#111c24;letter-spacing:0.000px;">14.4 MB</div>
<div class="t" style="left:1073.6px;top:551.20px;font-size:14.13px;color:#2e70c4;letter-spacing:0.000px;">Estimated Usage Dashboard</div>
<svg style="left:1052px;top:552px" width="14" height="12" viewBox="0 0 14 12"><path d="M1 1V11H13" fill="none" stroke="#2e70c4" stroke-width="1.5"/><path d="M2.5 10.5V6L5 3.5L7.5 6L10 4L12.5 7V10.5Z" fill="#2e70c4"/></svg>
<div class="t" style="left:1349.1px;top:484.50px;font-size:14.1px;color:#36414c;letter-spacing:0.000px;">Est. Monthly Usage</div>
<div class="t" style="left:1369.0px;top:510.60px;font-size:26.36px;color:#111c24;letter-spacing:0.000px;">6%</div>
<div class="r" style="left:1416px;top:515.5px;width:61px;height:13.5px;background:#e2e5ee;"></div>
<div class="r" style="left:1416px;top:515.5px;width:3.5px;height:13.5px;background:#3d8fe0;"></div>
<div class="t" style="left:1361.8px;top:551.20px;font-size:14.29px;color:#2e70c4;letter-spacing:0.000px;">Usage &amp; Billing</div>
<div class="t" style="left:1542.2px;top:484.50px;font-size:14.18px;color:#36414c;letter-spacing:0.154px;">Of Monthly Available</div>
<div class="t" style="left:1564.6px;top:511.60px;font-size:25.57px;color:#111c24;letter-spacing:-0.000px;">150 GB</div>
<div class="t" style="left:1532.0px;top:547.00px;font-size:14.18px;color:#1c2b34;letter-spacing:0.125px;">Across All Infrastructure</div>
<div class="r" style="left:14px;top:608px;width:1688px;height:1px;background:#e0e3eb;"></div>
<div class="r" style="left:13px;top:627px;width:1689px;height:70px;border:1px solid #dfe3eb;border-radius:4px;"></div>
<div class="t" style="left:24.0px;top:654.30px;font-size:17.28px;font-weight:700;color:#1c2b34;letter-spacing:0.000px;">Manage Ingestion for All Services</div>
<div class="r" style="left:346px;top:645.5px;width:286px;height:31.0px;background:#1c6cc4;border:1px solid #0b55b8;border-radius:4px;"></div>
<svg style="left:359px;top:653px" width="17" height="17" viewBox="0 0 17 17"><path d="M1.4 2.4V15.2H15.6" fill="none" stroke="#e8eef8" stroke-width="1.9"/><path d="M2.4 11.3C4.6 10.2 5.6 1.6 9 1.6C12.2 1.6 12.8 10.4 15.4 11.4" fill="none" stroke="#f4f7fc" stroke-width="1.6"/><circle cx="14.6" cy="6.3" r="1.1" fill="#fff"/></svg>
<div class="t" style="left:383.8px;top:655.10px;font-size:14.57px;font-weight:700;color:#fff;letter-spacing:0.000px;">Manage Adaptive Sampling Target</div>
<div class="r" style="left:649px;top:645.5px;width:296px;height:31.5px;border:1px solid #c9cfe0;border-radius:3px;background:#fff;"></div>
<svg style="left:663px;top:653.8px" width="15.84" height="15.84" viewBox="0 0 18 18"><g fill="#5b6670"><path d="M4.5 13.5L13.5 4.5" stroke="#5b6670" stroke-width="3.8"/><circle cx="12.3" cy="3.2" r="2.4"/><circle cx="14.8" cy="5.7" r="2.4"/><circle cx="3.2" cy="12.3" r="2.4"/><circle cx="5.7" cy="14.8" r="2.4"/></g></svg>
<div class="t" style="left:687.5px;top:653.70px;font-size:15.75px;color:#1c2b34;letter-spacing:0.010px;">Configure Datadog Agent Ingestion</div>
<div class="r" style="left:640px;top:639px;width:314px;height:49px;border:3px solid #ee0000;"></div>
<div class="r" style="left:790.5px;top:655px;width:5.5px;height:13px;background:#fff;"></div>
<div class="r" style="left:786px;top:645px;width:3px;height:2px;background:#fff;"></div>
<div class="r" style="left:804px;top:645px;width:3px;height:2px;background:#fff;"></div>
<div class="r" style="left:77px;top:697px;width:1px;height:36px;background:#dfe3eb;"></div>
<div class="r" style="left:13px;top:733px;width:1689px;height:242.5px;border:1px solid #dfe3eb;border-bottom-color:transparent;border-radius:4px;"></div>
<div class="r" style="left:77px;top:975px;width:1px;height:4px;background:#e3e6ef;"></div>
<div class="t" style="left:24.0px;top:760.20px;font-size:17.36px;font-weight:700;color:#1c2b34;letter-spacing:0.000px;">Manage Ingestion Per-Service</div>
<div class="r" style="left:346px;top:752px;width:337px;height:31px;border:1px solid #c9cfe0;border-radius:3px;"></div>
<svg style="left:357px;top:759px" width="16" height="16" viewBox="0 0 16 16"><circle cx="6.4" cy="6.5" r="5.5" fill="none" stroke="#8c9399" stroke-width="1.9"/><path d="M10.3 10.4L14.7 14.8" stroke="#8c9399" stroke-width="2.1"/></svg>
<div class="t" style="left:383.6px;top:761.40px;font-size:15.19px;color:#9aa0a9;letter-spacing:0.000px;">Filter by service name...</div>
<div class="r" style="left:701px;top:752px;width:85px;height:31px;border:1px solid #c9cfe0;border-radius:3px;"></div>
<div class="t" style="left:711.5px;top:760.00px;font-size:15.75px;color:#1c2b34;letter-spacing:0.372px;">env:*</div>
<svg style="left:766px;top:765px" width="10" height="6"><path d="M0 0H10L5 6Z" fill="#5b6470"/></svg>
<div class="r" style="left:803.5px;top:756.5px;width:36.0px;height:21.5px;background:#a0a6bc;border-radius:11px;"></div>
<div class="r" style="left:806.5px;top:759.5px;width:15.0px;height:15.5px;background:#fff;border-radius:50%;"></div>
<div class="t" style="left:847.7px;top:762.00px;font-size:13.75px;color:#1c2b34;letter-spacing:0.000px;">Only Root Services</div>
<div class="t" style="left:1336.5px;top:760.30px;font-size:15.75px;color:#36414c;letter-spacing:0.015px;">Config:</div>
<div class="r" style="left:1395px;top:752px;width:63px;height:31px;border:1px solid #c9cfe0;border-radius:3px;"></div>
<div class="t" style="left:1404.6px;top:760.30px;font-size:15.39px;color:#1c2b34;letter-spacing:0.000px;">All</div>
<svg style="left:1438px;top:765px" width="10" height="6"><path d="M0 0H10L5 6Z" fill="#5b6470"/></svg>
<div class="t" style="left:1485.5px;top:760.30px;font-size:15.46px;color:#36414c;letter-spacing:0.000px;">Adaptive Sampling:</div>
<div class="r" style="left:1627px;top:752px;width:64px;height:31px;border:1px solid #c9cfe0;border-radius:3px;"></div>
<div class="t" style="left:1637.7px;top:761.30px;font-size:14.94px;color:#1c2b34;letter-spacing:0.000px;">All</div>
<svg style="left:1671px;top:765px" width="10" height="6"><path d="M0 0H10L5 6Z" fill="#5b6470"/></svg>
<div class="r" style="left:14px;top:802px;width:1687px;height:34px;background:#f7f8fa;border-top:1px solid #e3e6ed;border-bottom:1px solid #e3e6ed;"></div>
<div class="t" style="left:24.0px;top:813.70px;font-size:14.05px;font-weight:700;color:#1c2b34;letter-spacing:0.000px;">INSTRUMENTED SERVICES SENDING DATA</div>
<div class="t" style="left:1434.0px;top:813.30px;font-size:14.95px;color:#1c2b34;letter-spacing:0.000px;"><b>4.01 KB/s</b> Ingested across all Services</div>
<div class="t" style="left:28.0px;top:847.80px;font-size:12.88px;font-weight:700;color:#1c2b34;letter-spacing:-0.717px;">TYPE</div>
<div class="t" style="left:80.0px;top:846.80px;font-size:13.45px;font-weight:700;color:#1c2b34;letter-spacing:0.000px;">NAME</div>
<div class="t" style="left:527.1px;top:847.80px;font-size:12.88px;font-weight:700;color:#1c2b34;letter-spacing:-0.197px;">INGESTED TRACES/S</div>
<div class="t" style="left:684.4px;top:847.80px;font-size:12.88px;font-weight:700;color:#1c2b34;letter-spacing:-0.149px;">INGESTED BYTES/S</div>
<svg style="left:843px;top:843px" width="16" height="17" viewBox="0 0 16 17"><path d="M4 1V15M1 12L4 15.5L7 12" fill="none" stroke="#1c2b34" stroke-width="1.5"/><path d="M8 1.9H15.5M8 4.4H13.2M8 6.7H11.4" stroke="#2a353f" stroke-width="1.8"/></svg>
<div class="t" style="left:867.0px;top:846.80px;font-size:13.15px;font-weight:700;color:#1c2b34;letter-spacing:0.000px;">DOWNSTREAM ...</div>
<div class="t" style="left:1000.0px;top:847.80px;font-size:12.88px;font-weight:700;color:#1c2b34;letter-spacing:-0.160px;">TRAFFIC BREAKDO...</div>
<div class="t" style="left:1157.5px;top:846.80px;font-size:13.46px;font-weight:700;color:#1c2b34;letter-spacing:0.000px;">CONFIGURATION</div>
<div class="t" style="left:1337.0px;top:847.80px;font-size:12.95px;font-weight:700;color:#1c2b34;letter-spacing:0.000px;">INFRASTRUC...</div>
<div class="t" style="left:1450.0px;top:846.80px;font-size:13.0px;font-weight:700;color:#1c2b34;letter-spacing:0.000px;">ADAPTIVE SAMPLING</div>
<div class="r" style="left:14px;top:868px;width:1687px;height:1px;background:#e3e6ed;"></div>
<div class="r" style="left:27px;top:876.5px;width:25px;height:25.0px;background:#8f7bbd;border-radius:4px;"></div>
<svg style="left:30.5px;top:879.5px" width="19" height="19" viewBox="0 0 19 19"><circle cx="9.5" cy="9.5" r="7.3" fill="none" stroke="#fff" stroke-width="1.5"/><ellipse cx="9.5" cy="9.5" rx="3.1" ry="7.3" fill="none" stroke="#fff" stroke-width="1.3"/><path d="M2.6 7H16.4M2.6 12.1H16.4" stroke="#fff" stroke-width="1.3"/></svg>
<div class="t" style="left:80.0px;top:879.50px;font-size:15.2px;font-weight:700;color:#1c2b34;letter-spacing:0.000px;">myapp</div>
<div class="t" style="left:527.1px;top:879.50px;font-size:15.32px;color:#1c2b34;letter-spacing:0.000px;"><b>1.10</b> traces/s</div>
<div class="t" style="left:684.4px;top:879.50px;font-size:15.08px;color:#1c2b34;letter-spacing:0.000px;"><b>4.01</b> KB/s</div>
<div class="t" style="left:841.9px;top:879.50px;font-size:15.01px;color:#1c2b34;letter-spacing:0.000px;"><b>4.01</b> KB/s</div>
<div class="t" style="left:1001.0px;top:880.50px;font-size:14.81px;color:#36414c;letter-spacing:0.000px;">8.98%</div>
<div class="r" style="left:1051px;top:879px;width:90px;height:13px;background:#e6e6ea;"></div>
<div class="r" style="left:1051px;top:879px;width:8.5px;height:13px;background:#7fcbbb;"></div>
<div class="r" style="left:1157.5px;top:877px;width:84.0px;height:21px;background:#eef0f4;border-radius:4px;"></div>
<div class="t" style="left:1163.2px;top:883.00px;font-size:12.36px;font-weight:700;color:#5c636e;letter-spacing:0.000px;">AUTOMATIC</div>
<div class="r" style="left:1450px;top:877px;width:88px;height:21px;background:#e5f1fc;border-radius:4px;"></div>
<div class="t" style="left:1456.1px;top:884.00px;font-size:11.96px;font-weight:700;color:#2a70c2;letter-spacing:-0.044px;">COMPATIBLE</div>
<svg style="left:1543.5px;top:880.5px" width="14.4" height="14.4" viewBox="0 0 18 18"><g fill="#1f66c1"><path d="M4.5 13.5L13.5 4.5" stroke="#1f66c1" stroke-width="3.8"/><circle cx="12.3" cy="3.2" r="2.4"/><circle cx="14.8" cy="5.7" r="2.4"/><circle cx="3.2" cy="12.3" r="2.4"/><circle cx="5.7" cy="14.8" r="2.4"/></g></svg>
<div class="r" style="left:1568px;top:881px;width:15.5px;height:2px;background:#1f66c1;border-radius:1px;"></div>
<div class="r" style="left:1568px;top:885px;width:3px;height:2px;background:#1f66c1;border-radius:1px;"></div>
<div class="r" style="left:1573px;top:885px;width:10.5px;height:2px;background:#1f66c1;border-radius:1px;"></div>
<div class="r" style="left:1573px;top:889px;width:6px;height:2px;background:#1f66c1;border-radius:1px;"></div>
<div class="r" style="left:1581px;top:889px;width:2.5px;height:2px;background:#1f66c1;border-radius:1px;"></div>
<div class="r" style="left:1576px;top:893px;width:3px;height:2px;background:#1f66c1;border-radius:1px;"></div>
<div class="r" style="left:14px;top:917.5px;width:1687px;height:1.0px;background:#e3e6ed;"></div>
<div class="t" style="left:1555.3px;top:939.90px;font-size:15.13px;color:#1c2b34;letter-spacing:0.000px;">Showing <b>1–1</b> of <b>1</b></div>
</body></html>
